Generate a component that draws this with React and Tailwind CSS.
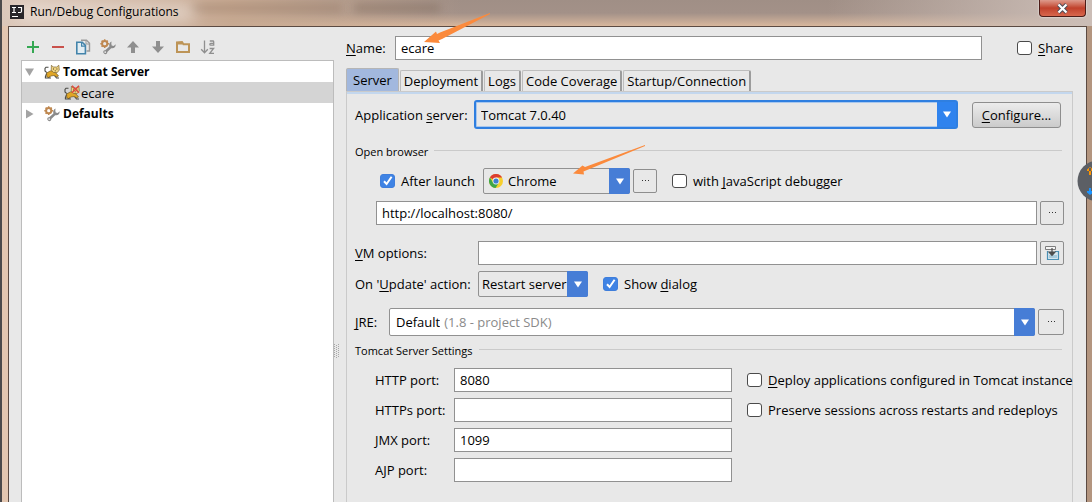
import React from "react";

const INPUT =
  "h-6 min-w-0 border border-[#919191] bg-white px-[5px] text-[13px] leading-5 text-black outline-none";

function Label({ children, className = "", ...rest }) {
  return (
    <label className={"shrink-0 whitespace-nowrap " + className} {...rest}>
      {children}
    </label>
  );
}

function U({ children }) {
  return <span className="underline underline-offset-2">{children}</span>;
}

function Check({ id, checked = false, children }) {
  return (
    <div className="flex shrink-0 items-center gap-[6px]">
      <span className="relative flex">
        <input
          id={id}
          type="checkbox"
          defaultChecked={checked}
          className="peer h-[14px] w-[15px] appearance-none rounded-[3px] border border-[#4a4a4a] bg-white checked:border-[#3f7edb] checked:bg-[#3f83e4]"
        />
        <svg
          viewBox="0 0 15 14"
          className="pointer-events-none absolute inset-0 hidden h-[14px] w-[15px] peer-checked:block"
        >
          <path d="M4 7.2 6.6 10 11.6 2.8" fill="none" stroke="#fff" strokeWidth="2" />
        </svg>
      </span>
      <label htmlFor={id} className="whitespace-nowrap">
        {children}
      </label>
    </div>
  );
}

function ComboArrow({ className }) {
  return (
    <span className={"pointer-events-none flex shrink-0 items-center justify-center " + className}>
      <svg width="10" height="7" viewBox="0 0 10 7">
        <path d="M1 0.5H9L5 6.5Z" fill="#fff" />
      </svg>
    </span>
  );
}

function MoreButton({ label, className = "h-6 w-6", children }) {
  return (
    <button
      aria-label={label}
      className={
        "flex shrink-0 items-center justify-center rounded-[2px] border border-[#8e8e8e] bg-[#e8e8e8] " + className
      }
    >
      {children || (
        <svg width="9" height="2" viewBox="0 0 9 2">
          <path d="M1 0h1v1H1zM4 0h1v1H4zM7 0h1v1H7z" fill="#333" />
        </svg>
      )}
    </button>
  );
}

function Section({ title }) {
  return (
    <div className="flex h-[18px] items-start gap-[6px] pr-[2px]">
      <h2 className="pt-[2px] text-[11px] leading-4">{title}</h2>
      <div className="mt-2 h-px flex-1 bg-[#cacaca]" />
    </div>
  );
}

function WrenchIcon() {
  return (
    <svg width="16" height="16" viewBox="0 0 16 16">
      <circle cx="4.7" cy="4.7" r="2.6" fill="none" stroke="#bf8850" strokeWidth="2" />
      <path
        d="M4.7 .3v1.6M4.7 7.5v1.6M.3 4.7h1.6M7.500 4.7h1.6M1.6 1.6l1 1M7.8 1.6l-1 1M1.6 7.8l1-1"
        stroke="#bf8850"
        strokeWidth="1.5"
      />
      <path
        d="M11.6 2.6C9.6 3.4 8.7 5.4 9.4 7.4L5.2 11.2C3.2 11 2.6 13.200 4 14.6 5.4 15.800 7.5 15 7.300 13L11.200 9.2C13.6 9.900 15.900 8.200 15.700 5.3L13.7 7 11.700 6.4 11.300 4.400Z"
        fill="#8b8b8b"
      />
      <circle cx="5.2" cy="13.1" r=".9" fill="#eee" />
    </svg>
  );
}

function TomcatIcon({ crossed = false }) {
  return (
    <svg width="16" height="16" viewBox="0 0 16 16">
      <path
        d="M4.500 3.2H2L1 4.5V7L2.8 8.600M2.6 9.5 1.4 12.500V14h2.4M5.500 11.5 4.500 14h2.500M10.500 11.500l2 2.500h2.500"
        fill="none"
        stroke="#4a4a46"
        strokeWidth="1.1"
      />
      <path d="M2.6 9 6.500 6.8l3 .4 3 2.300 2 2.5-1.500 1-3-1.500-3 .5-2.500 1.500-1.700-.5Z" fill="#dfa526" stroke="#5b4717" strokeWidth=".6" />
      <path d="M7.4 1.2 9.2 3h3.600L14.800 1.200l.5 4.800-2 2.500H9.500L7.200 6Z" fill="#efd382" stroke="#7c6532" strokeWidth=".7" />
      <path d="M9 4.600h1v1H9zM12.400 4.600h1v1h-1zM10.700 6.600h1.200v.7h-1.200z" fill="#4b3d1a" />
      {crossed && <path d="M8 .8 15 7.800M15 .8 8 7.800" stroke="#df4a3e" strokeWidth="1.500" />}
    </svg>
  );
}

function ChromeIcon() {
  return (
    <svg width="14" height="14" viewBox="0 0 14 14" className="shrink-0">
      <circle cx="7" cy="7" r="7" fill="#f7cf2d" />
      <path d="M7 7 .9 3.5A7 7 0 0 1 13.1 3.6H7Z" fill="#dc3d31" />
      <path d="M.9 3.5A7 7 0 0 0 6.6 14L9.8 8.7 4.2 8.7Z" fill="#3fa648" />
      <circle cx="7" cy="7" r="3.4" fill="#f4f6f4" />
      <circle cx="7" cy="7" r="2.6" fill="#3f7fd0" />
    </svg>
  );
}

const TOOLS = [
  ["Add", <path key="a" d="M8 2v12M2 8h12" stroke="#35a853" strokeWidth="2" />],
  ["Remove", <path key="a" d="M2 8h12" stroke="#c9514b" strokeWidth="2" />],
  [
    "Copy",
    <g key="a" fill="none">
      <path d="M6 1.2h5.5l3 3V12h-3" stroke="#9a9a9a" strokeWidth="1.4" />
      <path d="M11 1v4h4" stroke="#9a9a9a" />
      <path d="M1.8 3.2h5.4l3.2 3.2v8.4H1.8Z" fill="#e2edf3" stroke="#4384ab" strokeWidth="1.6" />
      <path d="M6.6 3.5v3.6h3.6" stroke="#4384ab" strokeWidth="1.2" />
    </g>,
  ],
  ["Edit defaults", null],
  ["Move up", <path key="a" d="M8 2 14 8.4h-4V14H6V8.4H2Z" fill="#8f8f8f" />],
  ["Move down", <path key="a" d="M8 14 14 7.6h-4V2H6v5.6H2Z" fill="#8f8f8f" />],
  [
    "Create folder",
    <path key="a" d="M2 3.500V13H14V5.200H8.500L7 3Z M2 4.500H7.500" fill="none" stroke="#bd9457" strokeWidth="2" />,
  ],
  [
    "Sort alphabetically",
    <g key="a" fill="none" stroke="#8f8f8f" strokeWidth="1.3">
      <path d="M4.5 1.5v12M1.2 10.2l3.3 3.6 3.3-3.6" />
      <path d="M9.8 2h3.1q.8 0 .8.8v3.4h-2.9q-1 0-1-.9t1-.9h2.9M9.6 9.5h4l-3.8 4.8h4.2" />
    </g>,
  ],
];

const TABS = ["Deployment", "Logs", "Code Coverage", "Startup/Connection"];

const PORTS = [
  ["http", "HTTP port:", "8080"],
  ["https", "HTTPs port:", ""],
  ["jmx", "JMX port:", "1099"],
  ["ajp", "AJP port:", ""],
];

function TitleBar() {
  return (
    <header className="relative flex h-[26px] items-center overflow-hidden bg-linear-to-b from-[#a08f86] via-[#a39188] to-[#d8b79d] pb-[2px] pl-2">
      <div className="absolute inset-y-0 left-0 w-[460px] bg-linear-to-r from-[#dcc8ba] via-[#c7a992] to-transparent" />
      <div className="absolute inset-y-0 right-0 w-[260px] bg-linear-to-r from-transparent to-[#cbbdb6]" />
      <div className="absolute top-1 left-[190px] h-2 w-[150px] bg-[#8f705c]/40 blur-xs" />
      <div className="absolute top-1 left-[352px] h-2 w-[86px] bg-[#745c4e]/40 blur-xs" />
      <div className="absolute top-1 left-[14px] h-[18px] w-[180px] rounded-full bg-white/40 blur-sm" />
      <svg width="14" height="14" viewBox="0 0 14 14" className="relative shrink-0">
        <path d="M0 0h14v14H0z" fill="#28262a" />
        <path d="M2 2.5h4M4 2.5v5M2 7.5h4M8 2.5h3.5v3.8q0 1.2-1.2 1.2H8M2 11.5h6" fill="none" stroke="#fff" strokeWidth="1.2" />
      </svg>
      <h1 className="relative ml-[6px] text-[12px] leading-5">Run/Debug Configurations</h1>
      <button
        aria-label="Close"
        className="absolute top-0 right-px flex h-[17px] w-[47px] items-center justify-center rounded-b-[4px] border border-t-0 border-[#4d1c17] bg-linear-to-b from-[#dd9a8c] via-[#c0402b] to-[#d8674d] shadow-[0_0_2px_#fff]"
      >
        <svg width="13" height="11" viewBox="0 0 13 11">
          <path d="M2.5 1.5 10.5 9.5M10.5 1.5 2.5 9.5" stroke="#4b4b57" strokeWidth="4" />
          <path d="M2.5 1.5 10.5 9.5M10.5 1.5 2.5 9.5" stroke="#fff" strokeWidth="2.2" />
        </svg>
      </button>
    </header>
  );
}

function Sidebar() {
  return (
    <aside className="flex w-[325px] shrink-0 flex-col pl-3">
      <div className="flex h-[33px] items-end gap-[9px] pb-[5px] pl-1">
        {TOOLS.map(([name, art]) => (
          <button key={name} aria-label={name} className="flex h-4 w-4 shrink-0">
            {art ? (
              <svg width="16" height="16" viewBox="0 0 16 16">
                {art}
              </svg>
            ) : (
              <WrenchIcon />
            )}
          </button>
        ))}
      </div>
      <ul className="flex-1 border border-b-0 border-[#bcbcbc] bg-white">
        <li className="flex h-[21px] items-center pl-[3px] text-[12px] font-bold">
          <svg width="10" height="10" viewBox="0 0 10 10">
            <path d="M0 1.5h9L4.5 9Z" fill="#a3a3a3" />
          </svg>
          <span className="ml-[9px] flex items-center gap-[3px]">
            <TomcatIcon />
            Tomcat Server
          </span>
        </li>
        <li className="flex h-[21px] items-center gap-px bg-[#d4d4d4] pl-[42px]">
          <TomcatIcon crossed />
          ecare
        </li>
        <li className="flex h-[21px] items-center pl-[3px] text-[12px] font-bold">
          <svg width="10" height="10" viewBox="0 0 10 10">
            <path d="M1 .5v9L8.5 5Z" fill="#a3a3a3" />
          </svg>
          <span className="ml-[9px] flex items-center gap-[3px]">
            <WrenchIcon />
            Defaults
          </span>
        </li>
      </ul>
    </aside>
  );
}

function ServerPanel() {
  return (
    <section className="flex flex-1 flex-col border border-b-0 border-[#cacaca] pr-2 pl-2">
      <div className="-mx-2 h-[2px] bg-[#c3d7ee]" />

      <div className="mt-[6px] flex items-center pr-[3px]">
        <Label htmlFor="appserver" className="w-[119px]">
          Application <U>s</U>erver:
        </Label>
        <div className="flex h-[29px] flex-1 rounded-[3px] border-2 border-[#2f7fe0] shadow-[inset_0_0_0_1px_#a9c8ee]">
          <select id="appserver" className="min-w-0 flex-1 appearance-none pl-[5px] outline-none">
            <option>Tomcat 7.0.40</option>
          </select>
          <ComboArrow className="w-[19px] bg-[#2f83ee]" />
        </div>
        <button className="ml-[14px] h-[26px] w-[89px] shrink-0 rounded-[3px] border border-[#8e8e8e] bg-linear-to-b from-[#ececec] to-[#cbcbcb]">
          <U>C</U>onfigure...
        </button>
      </div>

      <div className="mt-[13px]">
        <Section title="Open browser" />
      </div>

      <div className="mt-2 flex items-center pl-[25px]">
        <div className="w-[103px]">
          <Check id="launch" checked>
            After launch
          </Check>
        </div>
        <div className="flex h-[26px] w-[147px] shrink-0 items-center rounded-[2px] border border-[#919191] pl-[5px]">
          <ChromeIcon />
          <select aria-label="Browser" className="min-w-0 flex-1 appearance-none pl-[5px] outline-none">
            <option>Chrome</option>
          </select>
          <ComboArrow className="-my-px -mr-px h-[26px] w-[21px] rounded-r-[2px] bg-[#467dd6]" />
        </div>
        <div className="ml-[3px]">
          <MoreButton label="Browser settings" />
        </div>
        <div className="ml-[15px]">
          <Check id="jsdebug">
            with <U>J</U>avaScript debugger
          </Check>
        </div>
      </div>

      <div className="mt-[7px] flex gap-[3px] pl-[21px]">
        <input aria-label="URL" defaultValue="http://localhost:8080/" className={INPUT + " flex-1"} />
        <MoreButton label="Choose URL" />
      </div>

      <div className="mt-4 flex items-center gap-[3px]">
        <Label htmlFor="vm" className="w-[120px]">
          <U>V</U>M options:
        </Label>
        <input id="vm" className={INPUT + " flex-1"} />
        <MoreButton label="Expand VM options">
          <svg width="16" height="16" viewBox="0 0 16 16" className="shrink-0">
            <path d="M1.500 1.500h10v3h-10z" fill="#f5f5f5" stroke="#7d7d7d" />
            <path d="M3.500 6v8.500h11V6.500H11" fill="#d6e6ee" stroke="#4a90b5" strokeWidth="1.200" />
            <path d="M5 10h8v3H5z" fill="#a9cbdc" />
            <path d="M8 3v4M5 7h6L8 10.4Z" fill="#4d4d4d" stroke="#4d4d4d" strokeWidth="1.200" />
          </svg>
        </MoreButton>
      </div>

      <div className="mt-[6px] flex items-center">
        <Label htmlFor="update" className="w-[123px]">
          On '<U>U</U>pdate' action:
        </Label>
        <div className="flex h-[26px] w-[110px] shrink-0 items-center rounded-[2px] border border-[#919191]">
          <select id="update" className="min-w-0 flex-1 appearance-none pl-[3px] outline-none">
            <option>Restart server</option>
          </select>
          <ComboArrow className="-my-px -mr-px h-[26px] w-[21px] rounded-r-[2px] bg-[#467dd6]" />
        </div>
        <div className="ml-[15px]">
          <Check id="dialog" checked>
            Show <U>d</U>ialog
          </Check>
        </div>
      </div>

      <div className="mt-[11px] flex items-center">
        <Label htmlFor="jre" className="w-[34px]">
          <U>J</U>RE:
        </Label>
        <div className="flex h-7 flex-1 items-center rounded-[2px] border border-[#919191] bg-white">
          <select id="jre" className="field-sizing-content appearance-none pl-[6px] outline-none">
            <option>Default</option>
          </select>
          <span className="ml-1 flex-1 text-[#8a8a8a]">(1.8 - project SDK)</span>
          <ComboArrow className="-my-px -mr-px h-7 w-[21px] rounded-r-[2px] bg-[#467dd6]" />
        </div>
        <div className="ml-[3px]">
          <MoreButton label="Choose JRE" className="h-[26px] w-[26px]" />
        </div>
      </div>

      <div className="mt-[5px]">
        <Section title="Tomcat Server Settings" />
      </div>

      <div className="mt-[9px] flex gap-[15px] pl-5">
        <div className="flex flex-col gap-[6px]">
          {PORTS.map(([id, label, value]) => (
            <div key={id} className="flex items-center">
              <Label htmlFor={id} className="w-[79px]">
                {label}
              </Label>
              <input id={id} defaultValue={value} className={INPUT + " w-[278px]"} />
            </div>
          ))}
        </div>
        <div className="flex flex-col gap-[6px]">
          <div className="flex h-6 items-center">
            <Check id="deploy">
              <U>D</U>eploy applications configured in Tomcat instance
            </Check>
          </div>
          <div className="flex h-6 items-center">
            <Check id="preserve">Preserve sessions across restarts and redeploys</Check>
          </div>
        </div>
      </div>
    </section>
  );
}

function Splitter() {
  return (
    <div className="flex w-3 shrink-0 items-end justify-start pb-[143px]">
      <svg width="5" height="15" viewBox="0 0 5 15">
        {[0, 2, 4, 6, 8, 10, 12].map((y) => (
          <path key={y} d={`M0 ${y}h1v1H0zM2 ${y + 1}h1v1H2zM4 ${y}h1v1H4z`} fill="#a8a8a8" />
        ))}
      </svg>
    </div>
  );
}

export default function App() {
  return (
    <div className="relative flex min-h-screen flex-col overflow-hidden border-l-2 border-[#4c4a4b] bg-linear-to-r from-[#e3c6b0] from-50% to-[#b3957f] to-50% pr-[5px] pl-[6px] font-['Open_Sans','Noto_Sans',sans-serif] text-[13px] leading-5 text-black">
      <div className="-mr-[5px] -ml-[6px] bg-[#cbbdb6] pr-[5px]">
        <TitleBar />
      </div>
      <main className="flex flex-1 border border-b-0 border-[#5b4a42] bg-[#e8e8e8]">
        <Sidebar />
        <Splitter />
        <div className="flex min-w-0 flex-1 flex-col pr-[13px]">
          <div className="mt-[9px] flex items-center">
            <Label htmlFor="name" className="w-[49px]">
              <U>N</U>ame:
            </Label>
            <input id="name" defaultValue="ecare" className={INPUT + " mr-[35px] flex-1"} />
            <Check id="share">
              <U>S</U>hare
            </Check>
          </div>
          <div role="tablist" className="mt-2 flex h-[23px] items-end gap-px">
            <button role="tab" aria-selected="true" className="h-[23px] rounded-t-[2px] border border-b-0 border-[#b5b5b5] bg-[#a2b8de] px-[6px]">
              Server
            </button>
            {TABS.map((t) => (
              <button key={t} role="tab" className="h-[21px] rounded-t-[2px] border border-r-2 border-b-0 border-[#bdbdbd] border-r-[#9c9c9c] px-[3px]">
                {t}
              </button>
            ))}
          </div>
          <ServerPanel />
        </div>
      </main>

      <svg width="68" height="31" viewBox="0 0 68 31" className="pointer-events-none absolute top-[13px] left-[422px]">
        <path d="M66 0 16 19.5 13 21 12 18.5 0 29 16 30 14.5 27.500 18 26 66 1Z" fill="#fb8a3c" />
      </svg>
      <svg width="74" height="31" viewBox="0 0 74 31" className="pointer-events-none absolute top-[145px] left-[571px]">
        <path d="M72 0 12 22 9.500 20.500 0 28.500 11 29.500 10.500 26.500 72 1Z" fill="#fb8a3c" />
      </svg>
      <svg width="15" height="42" viewBox="0 0 15 42" className="pointer-events-none absolute top-[160px] right-0">
        <circle cx="21" cy="21" r="20.500" fill="#5c5f65" />
        <path d="M12 8v7h2V8ZM10 11V9.500L13 7l2 1.500V11Z" fill="#ff9500" />
        <path d="M12 28v6h2V28ZM10 31v1.500L13 35l2-1.500V31Z" fill="#1b94ff" />
      </svg>
    </div>
  );
}
